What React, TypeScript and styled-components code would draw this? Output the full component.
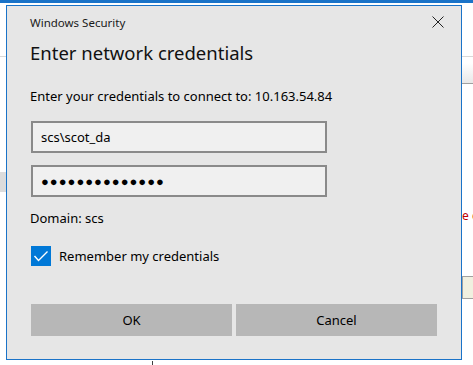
import styled, { createGlobalStyle } from 'styled-components';

const GlobalStyle = createGlobalStyle`
  html, body {
    margin: 0;
    padding: 0;
    background: #ffffff;
  }
  body {
    font-family: "Noto Sans", "Open Sans", sans-serif;
  }
`;

const Screen = styled.div`
  position: relative;
  width: 473px;
  height: 365px;
  overflow: hidden;
  background: #ffffff;
`;

const TopBar = styled.div`
  height: 3px;
  background: #1a73c8;
`;

// bits of the window that sits behind the dialog
const BackLine = styled.div`
  margin-top: 53px;
  height: 1px;
  background: #d8d8d8;
`;

const BackField = styled.div`
  margin: 6px 0 0 440px;
  height: 20px;
  background: linear-gradient(#ffffff, #e8e8e8);
  border-bottom: 1px solid #a0a0a0;
`;

const LeftTab = styled.div`
  margin-top: 88px;
  width: 8px;
  height: 20px;
  background: #dcdcdc;
`;

const BackText = styled.div`
  margin: 16px 0 0 462px;
  font-size: 12px;
  line-height: 16px;
  color: #c00000;
  white-space: nowrap;
`;

const BackBox = styled.div`
  margin: 52px 0 0 462px;
  width: 20px;
  height: 21px;
  background: #f0f0e0;
  border: 1px solid #a0a0a0;
`;

const BackLink = styled.div`
  margin: 62px 0 0 152px;
  padding-left: 15px;
  border-left: 1px solid #404040;
  font-size: 13px;
  line-height: 18px;
  color: #000;
  white-space: nowrap;
`;

const Dialog = styled.div`
  position: absolute;
  left: 6px;
  top: 5px;
  width: 456px;
  height: 355px;
  box-sizing: border-box;
  background: #e6e6e6;
  border: 1px solid #1a73c8;
  padding: 0 24px 0 23px;
  display: flex;
  flex-direction: column;
  align-items: flex-start;
  color: #000;
`;

const TitleRow = styled.div`
  align-self: stretch;
  display: flex;
  justify-content: space-between;
  align-items: center;
  height: 32px;
`;

const WindowTitle = styled.span`
  font-size: 11.5px;
  color: #1a1a1a;
`;

const CloseButton = styled.div`
  width: 14px;
  height: 14px;
  margin-right: -8px;
  display: flex;
  align-items: center;
  justify-content: center;
`;

const Heading = styled.h1`
  margin: 1px 0 0 0;
  font-size: 18.5px;
  font-weight: 400;
  line-height: 28px;
  color: #111;
`;

const Prompt = styled.p`
  margin: 20px 0 0 0;
  font-size: 13px;
  line-height: 18px;
`;

const Field = styled.div<{ first?: boolean }>`
  margin: ${(p) => (p.first ? 16 : 12)}px 0 0 1px;
  width: 296px;
  height: 32px;
  box-sizing: border-box;
  border: 2px solid #8a8a8a;
  background: #f0f0f0;
  display: flex;
  align-items: center;
  padding-left: 8px;
  font-size: 13px;
`;

const Dots = styled.span`
  font-size: 13px;
  letter-spacing: 1px;
`;

const Domain = styled.p`
  margin: 12px 0 0 0;
  font-size: 13px;
  line-height: 18px;
`;

const CheckRow = styled.label`
  display: flex;
  align-items: center;
  gap: 8px;
  margin: 19px 0 0 1px;
  font-size: 13px;
`;

const CheckBox = styled.span`
  width: 20px;
  height: 20px;
  background: #0078d7;
  display: flex;
  align-items: center;
  justify-content: center;
`;

const Buttons = styled.div`
  display: grid;
  grid-template-columns: 1fr 1fr;
  gap: 4px;
  margin: 38px 0 0 1px;
  width: 406px;
`;

const Button = styled.button`
  height: 32px;
  border: none;
  background: #b7b7b7;
  font-family: inherit;
  font-size: 13px;
  color: #000;
  padding: 0;
`;

export default function App() {
  return (
    <Screen>
      <GlobalStyle />
      <TopBar />
      <BackLine />
      <BackField />
      <LeftTab />
      <BackText>e c</BackText>
      <BackBox />
      <BackLink>Connect using different credentials</BackLink>
      <Dialog>
        <TitleRow>
          <WindowTitle>Windows Security</WindowTitle>
          <CloseButton>
            <svg width="12" height="12" viewBox="0 0 12 12">
              <path d="M0.5 0.5 L11.5 11.5 M11.5 0.5 L0.5 11.5" stroke="#222" strokeWidth="1" />
            </svg>
          </CloseButton>
        </TitleRow>
        <Heading>Enter network credentials</Heading>
        <Prompt>Enter your credentials to connect to: 10.163.54.84</Prompt>
        <Field first>scs\scot_da</Field>
        <Field>
          <Dots>●●●●●●●●●●●●●●</Dots>
        </Field>
        <Domain>Domain: scs</Domain>
        <CheckRow>
          <CheckBox>
            <svg width="16" height="12" viewBox="0 0 16 12">
              <path d="M1.5 6 L5.5 10.5 L14.5 1.5" stroke="#fff" strokeWidth="1.4" fill="none" />
            </svg>
          </CheckBox>
          Remember my credentials
        </CheckRow>
        <Buttons>
          <Button>OK</Button>
          <Button>Cancel</Button>
        </Buttons>
      </Dialog>
    </Screen>
  );
}
